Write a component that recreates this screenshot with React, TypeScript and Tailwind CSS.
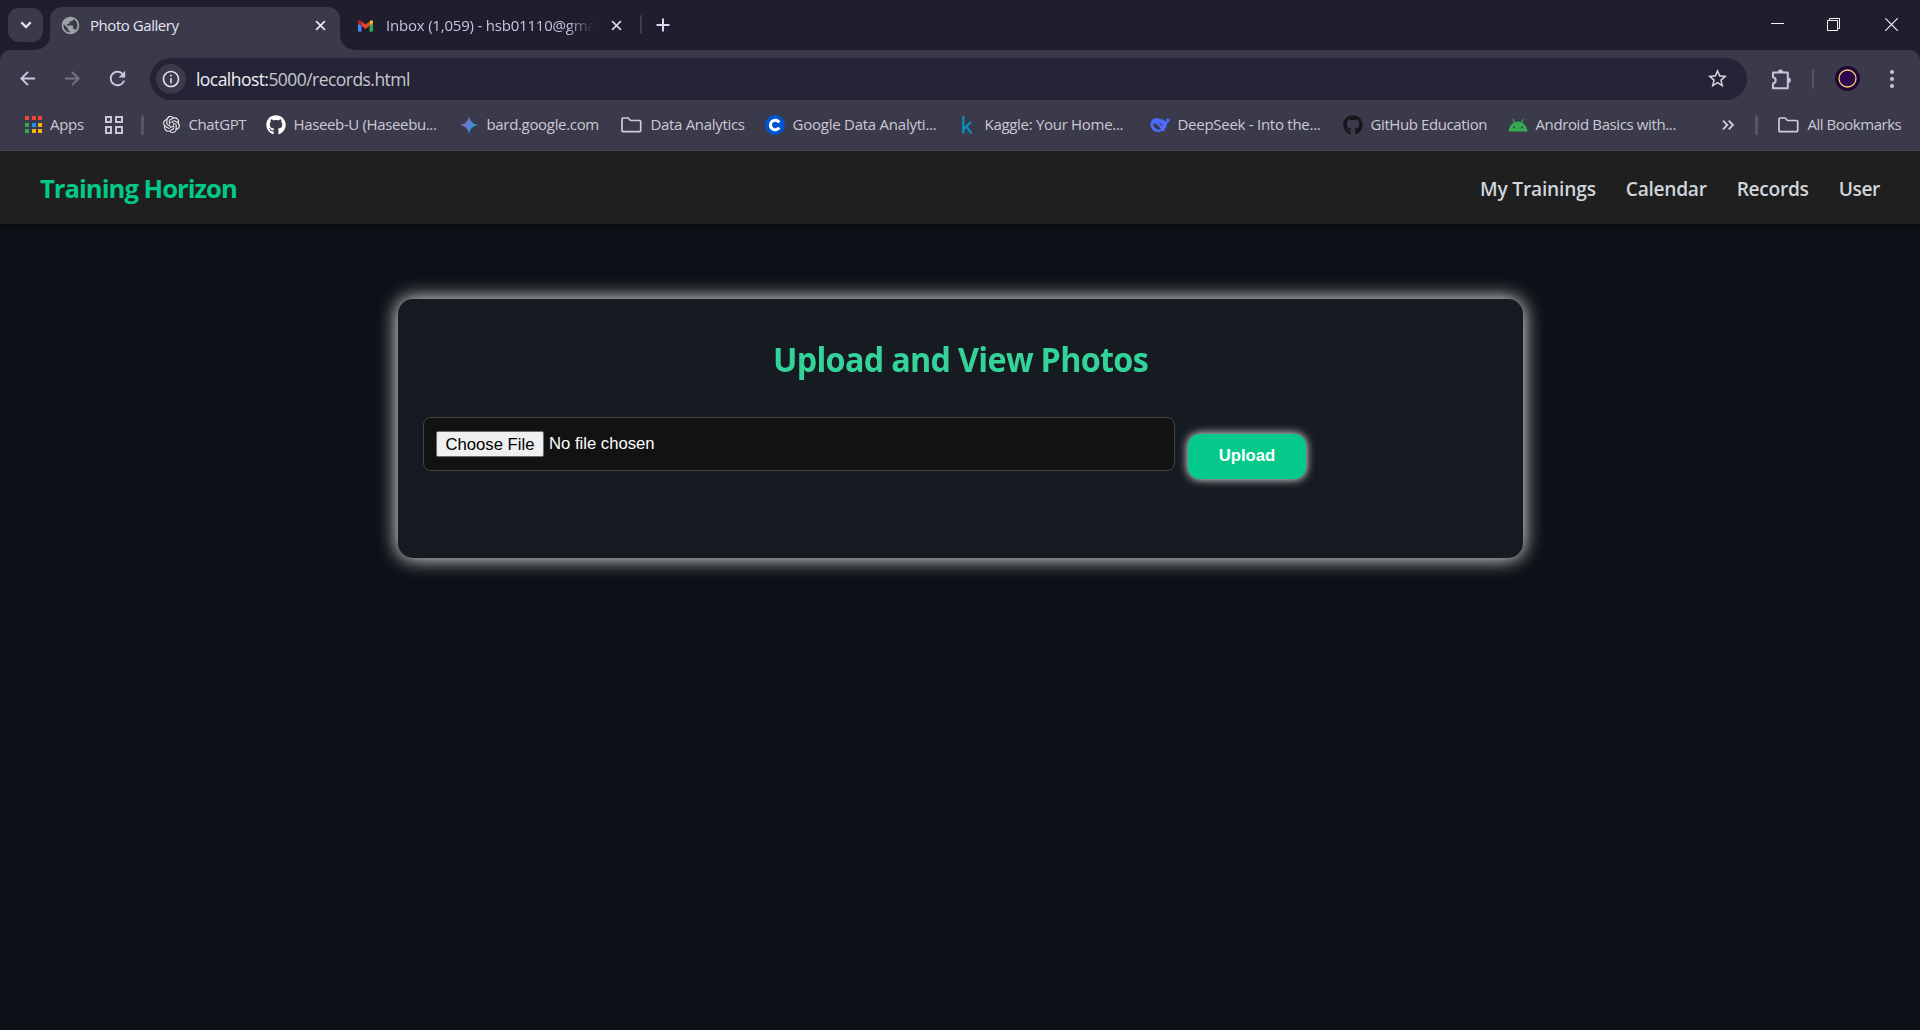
import type { ReactNode } from "react";
import { FaGithub } from "react-icons/fa";
import { SiOpenai } from "react-icons/si";
import { MdStarBorder, MdRefresh, MdPublic, MdOutlineInfo } from "react-icons/md";

function CloseIcon({ className }: { className: string }) {
  return (
    <svg viewBox="0 0 12 12" className={className} fill="none" stroke="currentColor" strokeWidth="1.9">
      <path d="M1.2 1.2l9.6 9.6M10.8 1.2l-9.6 9.6" />
    </svg>
  );
}

function GmailIcon() {
  return (
    <svg viewBox="0 0 52 40" className="h-[14px] w-[18px]">
      <path fill="#4285f4" d="M3.6 40H12V19.5L0 10.5v26A3.6 3.6 0 003.6 40z" />
      <path fill="#34a853" d="M40 40h8.4a3.6 3.6 0 003.6-3.5v-26l-12 9z" />
      <path fill="#fbbc04" d="M40 4v15.500l12-9V5.800C52 1.200 46.900-1.300 43.200 1.400z" />
      <path fill="#ea4335" d="M12 19.500V4l14 10.500L40 4v15.500L26 30z" />
      <path fill="#c5221f" d="M0 5.800v4.700l12 9V4L8.800 1.400C5.100-1.300 0 1.200 0 5.800z" />
    </svg>
  );
}

function FolderIcon() {
  return (
    <svg viewBox="0 0 21 16" className="h-[16px] w-[21px] shrink-0" fill="none" stroke="#cfcdda" strokeWidth="1.7" strokeLinejoin="round">
      <path d="M1 2.200A1.200 1.200 0 012.200 1h5l2.300 2.500h9A1.200 1.200 0 0119.700 4.700v8.800a1.200 1.200 0 01-1.200 1.200H2.200A1.200 1.200 0 011 13.500z" />
    </svg>
  );
}

function AppsIcon() {
  const colors = ["#f4443a", "#f4443a", "#f4443a", "#34a853", "#2490f0", "#fbb20c", "#34a853", "#fbb20c", "#fbb20c"];
  return (
    <span className="grid w-[17px] shrink-0 grid-cols-3 gap-[2.500px]">
      {colors.map((c, i) => (
        <span key={i} className="h-[4px] w-[4px]" style={{ backgroundColor: c }} />
      ))}
    </span>
  );
}

function Bookmark({ icon, label, className, text }: { icon: ReactNode; label: string; className: string; text: string }) {
  return (
    <div className={"flex shrink-0 items-center " + className}>
      <span className="mr-[7.500px] flex w-5 shrink-0 items-center justify-center">{icon}</span>
      <span className={"whitespace-nowrap pb-px " + text}>{label}</span>
    </div>
  );
}

const SparkIcon = (
  <svg viewBox="0 0 18 18" className="h-[18px] w-[18px]">
    <defs>
      <linearGradient id="spark" x1="0" x2="1" y1="0.3" y2="0.7">
        <stop offset="0.1" stopColor="#9168c0" />
        <stop offset="0.5" stopColor="#5684d1" />
        <stop offset="0.9" stopColor="#1ba1e3" />
      </linearGradient>
    </defs>
    <path fill="url(#spark)" d="M9 0c.7 5 4 8.300 9 9-5 .7-8.300 4-9 9-.7-5-4-8.300-9-9 5-.7 8.300-4 9-9z" />
  </svg>
);

const CourseraIcon = (
  <svg viewBox="0 0 20 20" className="h-5 w-5">
    <circle cx="10" cy="10" r="10" fill="#0056d2" />
    <path d="M14.200 7.300a4.800 4.800 0 100 5.400" fill="none" stroke="#fff" strokeWidth="3.100" />
  </svg>
);

const KaggleIcon = (
  <svg viewBox="0 0 12 18" className="h-[18px] w-[12px]" fill="none" stroke="#0a90bd" strokeWidth="2.200">
    <path d="M2.300 0v17.500M10 6l-7.200 6.800M5 10.300l5.600 7.200" />
  </svg>
);

const WhaleIcon = (
  <svg viewBox="0 0 20 16" className="h-[16px] w-[20px]">
    <path fill="#4d6bfe" d="M19.600 1.500c-.9.600-2.100.4-3-.3-.4 1.300.2 2.300 0 3.300-1.700-.2-2.900-1.600-4.400-2.800-.5.400-.3 1 .1 1.500C10.500 1.500 8 .800 5.500 1.300 2.300 1.900.400 4.400.500 7.800.700 11.800 4 15 8 15c2 0 3.400-.6 4.400-1.200 1 .5 2.100.8 2.700.3.300-.4-.5-.8-.9-1.600 2-1.800 3-4.300 3-6.600 1.900-.4 2.900-2.200 2.400-4.400z" />
    <path d="M3 6.300c3-.3 5.600 2.500 8.200 6-3.600 1.400-8-1.500-8.200-6z" fill="#3b3a4b" />
    <path d="M9.200 6.300c1.500-.5 3 .6 3.300 2.400-1.200.3-2.800-.9-3.300-2.400z" fill="#3b3a4b" />
  </svg>
);

const AndroidIcon = (
  <svg viewBox="0 0 20 14" className="h-[14px] w-[20px]">
    <path fill="#34a853" d="M.5 13.500C.9 9.600 3 6.300 6 4.600L4.200 1.500l1-.6L7.100 4a10.500 10.500 0 015.800 0L14.800.900l1 .6L14 4.600c3 1.700 5.100 5 5.500 8.900z" />
    <circle cx="6" cy="9.500" r="0.9" fill="#3b3a4b" />
    <circle cx="14" cy="9.500" r="0.9" fill="#3b3a4b" />
  </svg>
);

function TabStrip() {
  return (
    <div className="flex h-[50px] bg-[#1f1d2e]">
      <div className="ml-2 mt-2 flex h-[34px] w-[35px] items-center justify-center rounded-[11px] bg-[#3b3a4b]">
        <svg viewBox="0 0 12 8" className="h-[8px] w-[12px]" fill="none" stroke="#e6e4f2" strokeWidth="2.300">
          <path d="M1.300 1.300L6 6l4.700-4.700" />
        </svg>
      </div>
      <div className="relative ml-[7px] mt-[7px] flex h-[43px] w-[290px] items-center rounded-t-[12px] bg-[#3b3a4b] pb-[7px] pl-[10px]">
        <svg viewBox="0 0 15 15" className="absolute bottom-0 -left-[15px] h-[15px] w-[15px]">
          <path d="M15 0v15H0A15 15 0 0015 0z" fill="#3b3a4b" />
        </svg>
        <svg viewBox="0 0 15 15" className="absolute bottom-0 -right-[15px] h-[15px] w-[15px]">
          <path d="M0 0v15h15A15 15 0 010 0z" fill="#3b3a4b" />
        </svg>
        <MdPublic className="h-[21px] w-[21px] text-[#9ea2a8]" />
        <span className="ml-[9px] w-[225px] whitespace-nowrap text-[15px] tracking-[-0.45px] text-[#e6e4f2]">Photo Gallery</span>
        <CloseIcon className="h-[11px] w-[11px] shrink-0 text-[#e6e4f2]" />
      </div>
      <div className="ml-[18px] flex h-[50px] w-[264px] items-center pt-[1px]">
        <GmailIcon />
        <div className="ml-[13px] w-[210px] whitespace-nowrap text-[15px] tracking-[-0.2px] text-[#c8c4de] [mask-image:linear-gradient(to_right,#000_86%,transparent_99%)]">
          Inbox (1,059) - hsb01110@gmai
        </div>
        <CloseIcon className="ml-[15px] h-[11px] w-[11px] shrink-0 text-[#d3d0e6]" />
      </div>
      <div className="ml-[18px] mt-[15px] h-[19px] w-[2px] rounded bg-[#3f3d50]" />
      <svg viewBox="0 0 14 14" className="ml-[14px] mt-[18px] h-[14px] w-[14px]" stroke="#d8d5ec" strokeWidth="2">
        <path d="M7 0.500v13M0.500 7h13" />
      </svg>
      <div className="ml-auto flex gap-[43px] pr-[22px] pt-[18px] text-[#f4f4f4]">
        <svg viewBox="0 0 13 13" className="h-[13px] w-[13px]" stroke="currentColor">
          <path d="M0 5.500h13" />
        </svg>
        <svg viewBox="0 0 13 13" className="h-[13px] w-[13px]" stroke="currentColor" fill="none">
          <path d="M0.500 2.500h10v10h-10zM2.500 2.500v-2h10v10h-2" />
        </svg>
        <svg viewBox="0 0 13 13" className="ml-[2px] h-[13px] w-[13px]" stroke="currentColor" strokeWidth="1.200">
          <path d="M0.300 0.300l12.400 12.400M12.700 0.300L0.300 12.700" />
        </svg>
      </div>
    </div>
  );
}

function Toolbar() {
  return (
    <div className="flex h-[57px] items-center rounded-t-[10px] bg-[#3b3a4b] pl-[20px]">
      <svg viewBox="0 0 15 15" className="h-[15px] w-[15px]" fill="none" stroke="#cbc6e4" strokeWidth="1.900">
        <path d="M15 7.500H1.500M8 0.800L1.300 7.500 8 14.200" />
      </svg>
      <svg viewBox="0 0 15 15" className="ml-[30px] h-[15px] w-[15px]" fill="none" stroke="#777588" strokeWidth="1.900">
        <path d="M0 7.500h13.500M7 0.800l6.700 6.700L7 14.200" />
      </svg>
      <MdRefresh className="ml-[26px] h-[23px] w-[23px] text-[#cbc6e4]" />
      <div className="ml-[21px] flex h-[42px] w-[1597px] items-center rounded-full bg-[#242436] pl-[6px]">
        <div className="flex h-[30px] w-[30px] items-center justify-center rounded-full bg-[#3b3a4b]">
          <MdOutlineInfo className="h-[20px] w-[20px] text-[#e0ddec]" />
        </div>
        <div className="ml-[10px] whitespace-nowrap pt-px text-[17.500px] tracking-[-0.55px] text-[#c8c8cf]">
          <span className="text-[#f0f0f4]">localhost:</span>5000/records.html
        </div>
        <MdStarBorder className="ml-auto mr-[18px] h-[23px] w-[23px] text-[#d5d2e2]" />
      </div>
      <svg viewBox="0 0 22 22" className="ml-[23px] h-[22px] w-[22px]" fill="none" stroke="#c8c4de" strokeWidth="2" strokeLinejoin="round">
        <path d="M3 4.600h14.800v15.600H3v-4.800c3.600-.4 3.600-5.800 0-6.200z" />
        <path d="M7.800 4.200a2.700 2.700 0 015.400 0zM18.200 9.500a2.700 2.700 0 010 5.400z" fill="#c8c4de" stroke="none" />
      </svg>
      <div className="ml-[20px] h-[20px] w-[2px] rounded bg-[#56536a]" />
      <svg viewBox="0 0 25 25" className="ml-[21px] h-[25px] w-[25px]">
        <circle cx="12.500" cy="12.500" r="12.500" fill="#200536" />
        <circle cx="12.500" cy="12.500" r="8.500" fill="#2d0550" stroke="#f0cf6a" strokeWidth="1.300" />
      </svg>
      <div className="ml-[30px] flex flex-col gap-[3px]">
        <span className="h-[4px] w-[4px] rounded-full bg-[#cbc6e4]" />
        <span className="h-[4px] w-[4px] rounded-full bg-[#cbc6e4]" />
        <span className="h-[4px] w-[4px] rounded-full bg-[#cbc6e4]" />
      </div>
    </div>
  );
}

function BookmarksBar() {
  return (
    <div className="flex h-[44px] items-center border-b border-[#4a4a52] bg-[#3b3a4b] pb-[8px] pl-[25px] text-[15px] text-[#cbc9d6]">
      <AppsIcon />
      <span className="ml-[8px] w-[54.500px] shrink-0 pb-px tracking-[-0.3px]">Apps</span>
      <div className="grid w-[18px] shrink-0 grid-cols-2 gap-[3px]">
        {[0, 1, 2, 3].map((i) => (
          <span key={i} className="h-[7.500px] w-[7.500px] border-2 border-[#c8c6d6]" />
        ))}
      </div>
      <div className="ml-[18px] h-[20px] w-[3px] shrink-0 rounded bg-[#56536a]" />
      <Bookmark icon={<SiOpenai className="h-[17px] w-[17px] text-[#f0f0f0]" />} label="ChatGPT" className="ml-[17.500px] w-[105px]" text="tracking-[-0.4px]" />
      <Bookmark icon={<FaGithub className="h-[20px] w-[20px] text-white" />} label="Haseeb-U (Haseebu..." className="w-[193px]" text="tracking-[-0.36px]" />
      <Bookmark icon={SparkIcon} label="bard.google.com" className="w-[162px]" text="tracking-[-0.33px]" />
      <Bookmark icon={<FolderIcon />} label="Data Analytics" className="w-[144px]" text="ml-[2px] tracking-[-0.32px]" />
      <Bookmark icon={CourseraIcon} label="Google Data Analyti..." className="w-[192px]" text="tracking-[-0.24px]" />
      <Bookmark icon={KaggleIcon} label="Kaggle: Your Home..." className="w-[193px]" text="tracking-[-0.3px]" />
      <Bookmark icon={WhaleIcon} label="DeepSeek - Into the..." className="w-[193px]" text="tracking-[-0.27px]" />
      <Bookmark icon={<FaGithub className="h-[20px] w-[20px] text-[#15151b]" />} label="GitHub Education" className="w-[165px]" text="tracking-[-0.4px]" />
      <Bookmark icon={AndroidIcon} label="Android Basics with..." className="w-[214px]" text="tracking-[-0.38px]" />
      <svg viewBox="0 0 12 10" className="h-[10px] w-[12px] shrink-0" fill="none" stroke="#d0cde0" strokeWidth="1.800">
        <path d="M1 0.700L5.300 5 1 9.300M6.700 0.700L11 5 6.700 9.300" />
      </svg>
      <div className="ml-[21px] h-[20px] w-[3px] shrink-0 rounded bg-[#56536a]" />
      <div className="ml-[19.500px] flex items-center">
        <FolderIcon />
        <span className="ml-[9px] whitespace-nowrap pb-px tracking-[-0.48px]">All Bookmarks</span>
      </div>
    </div>
  );
}

function SiteNav() {
  return (
    <nav className="relative flex h-[73px] items-center justify-between bg-[#1f1f1f] px-10 pt-[4px] shadow-[0_2px_5px_rgba(0,0,0,0.5)]">
      <div className="text-[25.600px] font-bold tracking-[-0.97px] text-[#03c988]">Training Horizon</div>
      <div className="flex gap-[30px] whitespace-nowrap text-[19.200px] font-semibold text-[#d0d6dc]">
        <a className="tracking-[-0.2px]">My Trainings</a>
        <a className="tracking-[-0.3px]">Calendar</a>
        <a className="tracking-[-0.3px]">Records</a>
        <a className="tracking-[-0.4px]">User</a>
      </div>
    </nav>
  );
}

function UploadCard() {
  return (
    <section className="mx-auto mt-[75px] h-[259px] w-[1125px] rounded-[15px] bg-[#161b22] px-[25px] pt-[36px] shadow-[0_0_20px_#ffffff]">
      <h1 className="scale-x-[0.95] text-center text-[34px] leading-[48px] font-bold tracking-[-0.72px] text-[#34d399]">Upload and View Photos</h1>
      <div className="mt-[34px] flex items-start font-['Liberation_Sans',sans-serif]">
        <div className="flex h-[54px] w-[752px] items-center rounded-[8px] border border-[#444] bg-[#121212] pl-[12px] text-[16.670px] text-white">
          <button className="h-[26px] w-[108px] rounded-[2px] border border-[#6b6b6b] bg-[#efefef] pb-[3px] pl-px text-black">Choose File</button>
          <span className="ml-[5.500px] pb-px">No file chosen</span>
        </div>
        <button className="ml-[13px] mt-[17px] h-[45px] w-[118px] rounded-[12px] bg-[#04c98a] pb-[3px] pl-px text-[16.670px] font-bold text-white shadow-[0_0_10px_#ffffff]">
          Upload
        </button>
      </div>
    </section>
  );
}

export default function App() {
  return (
    <div className="h-[1030px] w-[1920px] overflow-hidden bg-[#0d1117] font-['Open_Sans',sans-serif]">
      <header className="bg-[#1f1d2e]">
        <TabStrip />
        <Toolbar />
        <BookmarksBar />
      </header>
      <SiteNav />
      <main>
        <UploadCard />
      </main>
    </div>
  );
}
